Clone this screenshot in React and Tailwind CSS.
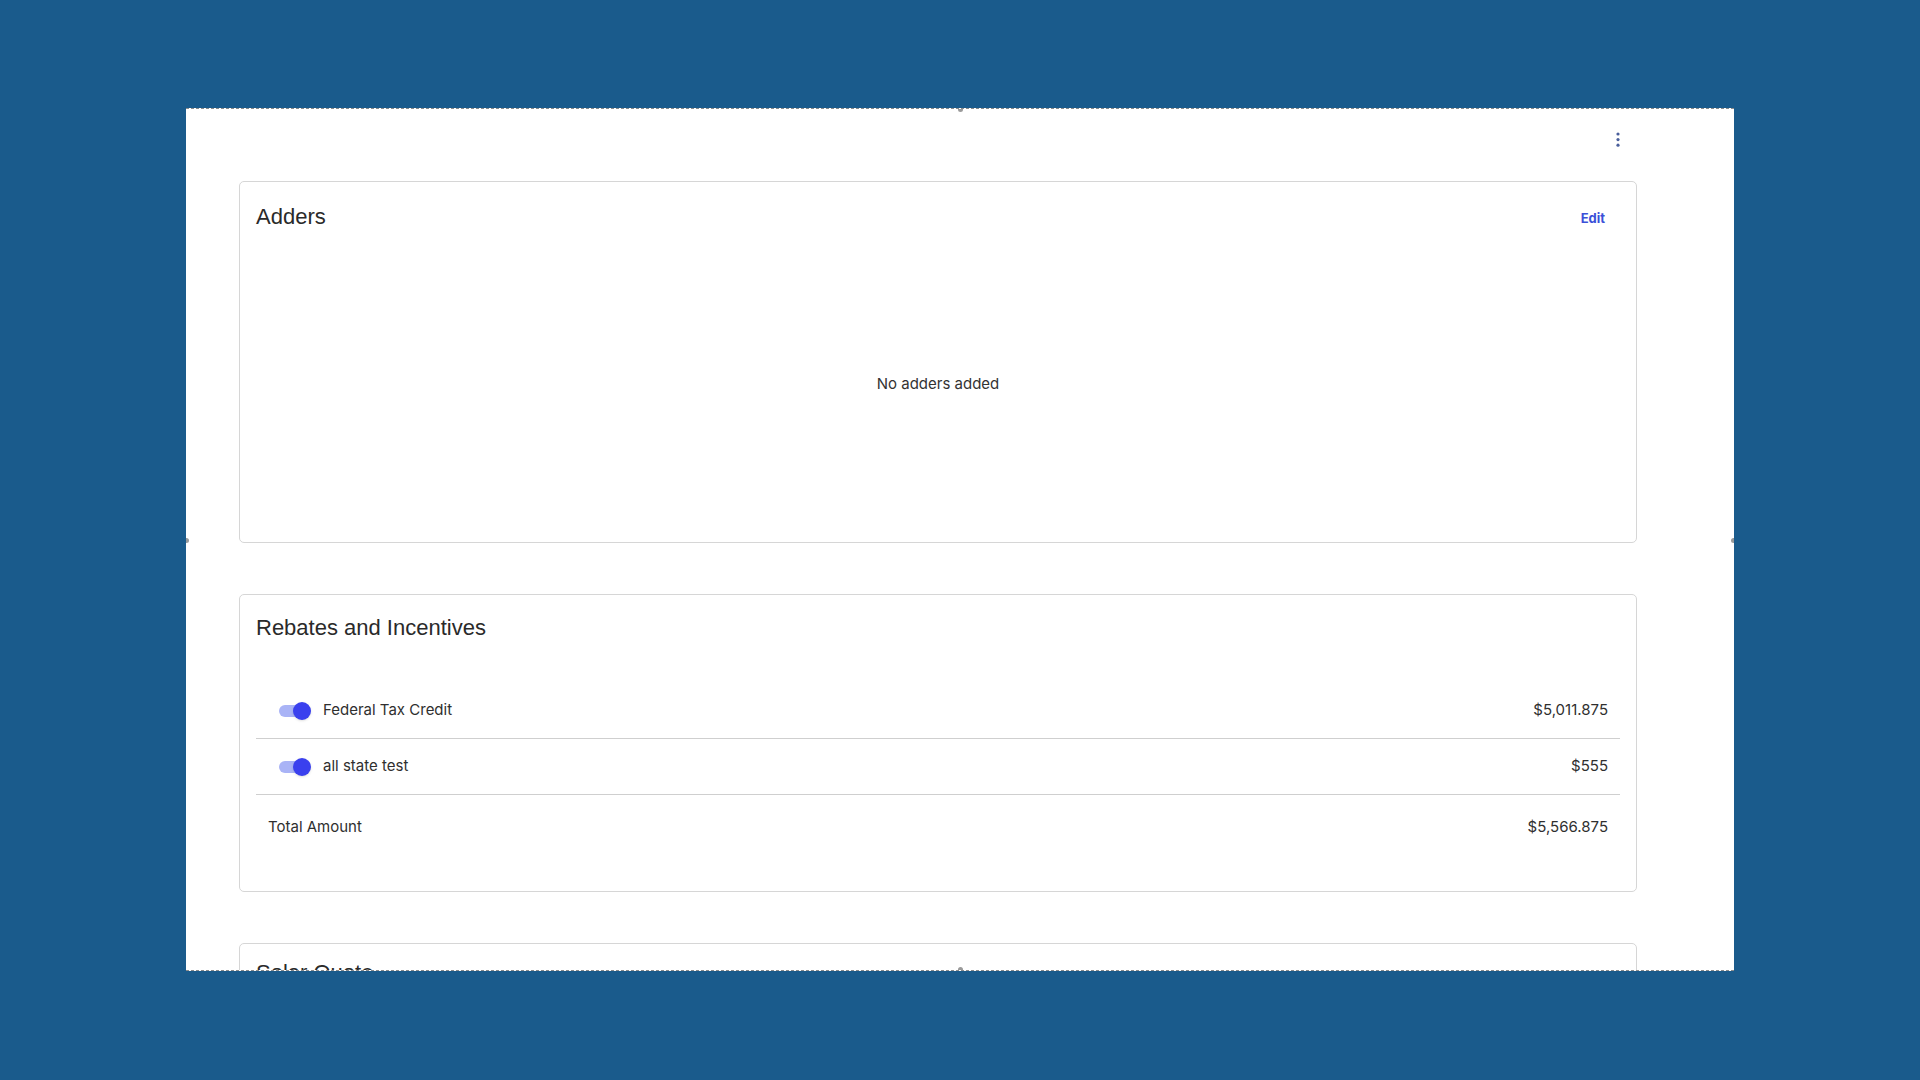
import { useState } from 'react';

const rebates = [
    { id: 1, name: 'Federal Tax Credit', amount: '$5,011.875' },
    { id: 2, name: 'all state test', amount: '$555' },
];

function Toggle({ on, onClick }) {
    return (
        <button onClick={onClick} className="relative w-[32px] h-[18px] shrink-0">
            <span className={`absolute left-0 top-[3px] w-[28px] h-[12px] rounded-full ${on ? 'bg-[#a9b3f6]' : 'bg-[#c9c9c9]'}`} />
            <span className={`absolute top-0 w-[18px] h-[18px] rounded-full shadow-sm ${on ? 'right-0 bg-[#3a40ee]' : 'left-0 bg-[#f5f5f5]'}`} />
        </button>
    );
}

function MoreVert() {
    return (
        <svg width="18" height="18" viewBox="0 0 18 18" fill="#4a5f9c">
            <circle cx="9" cy="3" r="1.6" />
            <circle cx="9" cy="8.6" r="1.6" />
            <circle cx="9" cy="14.2" r="1.6" />
        </svg>
    );
}

function Card({ title, action, children, className = '' }) {
    return (
        <div className={`w-[1398px] bg-white border border-[#d6d6d6] rounded-[5px] px-4 ${className}`}>
            <div className="flex items-center justify-between h-[28px] pr-[15px]">
                <h2 className="text-[22px] leading-[28px] text-[#2a2a2a] font-['Liberation_Sans',Arial,sans-serif]">{title}</h2>
                {action}
            </div>
            {children}
        </div>
    );
}

export default function App() {
    const [enabled, setEnabled] = useState({ 1: true, 2: true });

    const toggle = (id) => setEnabled((s) => ({ ...s, [id]: !s[id] }));

    return (
        <div className="min-h-screen bg-[#1a5b8c] pt-[108px] pl-[186px] font-['Inter',sans-serif] text-[#2f2f2f]">
            <div className="relative w-[1548px] h-[863px] bg-white border-y border-dashed border-[#8a8a8a] overflow-hidden">
                {/* resize handles */}
                <span className="absolute left-[772px] -top-[2px] w-[5px] h-[5px] rounded-full bg-[#9a9a9a]" />
                <span className="absolute left-[772px] -bottom-[2px] w-[5px] h-[5px] rounded-full bg-[#9a9a9a]" />
                <span className="absolute -left-[2px] top-[429px] w-[5px] h-[5px] rounded-full bg-[#9a9a9a]" />
                <span className="absolute -right-[2px] top-[429px] w-[5px] h-[5px] rounded-full bg-[#9a9a9a]" />

                <div className="flex justify-end w-[1398px] ml-[53px] pt-[22px] pr-[10px]">
                    <button><MoreVert /></button>
                </div>

                <div className="flex flex-col gap-[51px] ml-[53px] mt-[32px]">
                    <Card
                        title="Adders"
                        className="pt-[21px] pb-[5px]"
                        action={<button className="text-[13px] font-bold text-[#3b50d8] mt-[3px]">Edit</button>}
                    >
                        <div className="h-[306px] flex items-center justify-center text-[15px] text-[#333]">
                            No adders added
                        </div>
                    </Card>

                    <Card title="Rebates and Incentives" className="pt-[19px] pb-[32px]">
                        <div className="mt-[41px] text-[15px]">
                            {rebates.map((r) => (
                                <div key={r.id} className="flex items-center justify-between h-[56px] border-b border-[#cfcfcf] pl-[23px] pr-3">
                                    <div className="flex items-center gap-3">
                                        <Toggle on={enabled[r.id]} onClick={() => toggle(r.id)} />
                                        <span>{r.name}</span>
                                    </div>
                                    <span>{r.amount}</span>
                                </div>
                            ))}
                            <div className="flex items-center justify-between h-[64px] px-3">
                                <span>Total Amount</span>
                                <span>$5,566.875</span>
                            </div>
                        </div>
                    </Card>

                    <Card title="Solar Quote" className="pt-[15px]">
                        <div className="h-[300px]" />
                    </Card>
                </div>
            </div>
        </div>
    );
}
